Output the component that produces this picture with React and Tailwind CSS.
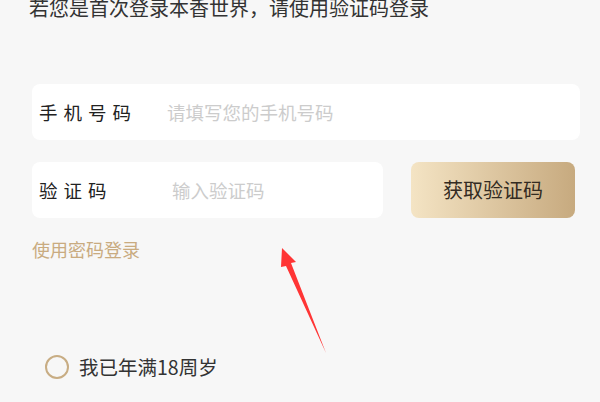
import React from 'react';

function InputRow({ label, placeholder, labelWidth, className }) {
  return (
    <div className={`h-[56px] bg-white rounded-[8px] flex items-center pl-[7px] ${className}`}>
      <span className="text-[18.5px] leading-[20px] tracking-[6px] text-[#222]" style={{ width: labelWidth }}>
        {label}
      </span>
      <span className="text-[18.5px] leading-[20px] text-[#cccccc]">{placeholder}</span>
    </div>
  );
}

export default function App() {
  return (
    <div
      className="relative w-[600px] h-[402px] overflow-hidden bg-[#f7f7f7]"
      style={{ fontFamily: '"Noto Sans CJK SC", "Noto Sans", sans-serif' }}
    >
      <div className="pl-[29px] -mt-[3px] text-[20px] leading-[22px] text-[#333]">
        若您是首次登录本香世界，请使用验证码登录
      </div>

      <div className="pl-[32px] pr-[20px] mt-[65px]">
        <InputRow label="手机号码" placeholder="请填写您的手机号码" labelWidth={128} className="w-[548px]" />

        <div className="flex items-center mt-[22px]">
          <InputRow label="验证码" placeholder="输入验证码" labelWidth={133} className="w-[351px]" />
          <button className="ml-[28px] w-[164px] h-[56px] rounded-[8px] bg-gradient-to-r from-[#f4e4c4] to-[#c7aa7f] text-[20px] text-[#332b22]">
            获取验证码
          </button>
        </div>

        <div className="mt-[20px] text-[18px] leading-[22px] text-[#c9ab80]">使用密码登录</div>

        <div className="flex items-center mt-[95px] pl-[13px]">
          <span className="w-[24px] h-[24px] rounded-full border-2 border-[#c8ad84]" />
          <span className="ml-[10px] text-[19.5px] leading-[22px] text-[#333]">我已年满18周岁</span>
        </div>
      </div>

      <svg className="absolute left-0 top-0 pointer-events-none" width="600" height="402">
        <polygon points="282,248 296,262 291,263 326,353 286,266 281,267" fill="#ff3535" />
      </svg>
    </div>
  );
}
